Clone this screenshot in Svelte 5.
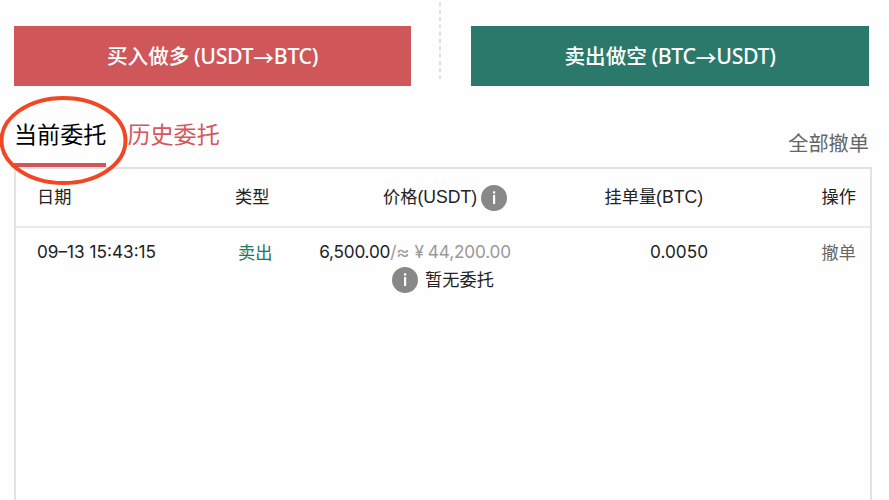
<script lang="ts">
	let tab = $state('current');

	const sides = [
		{ key: 'buy', label: '买入做多', from: 'USDT', to: 'BTC' },
		{ key: 'sell', label: '卖出做空', from: 'BTC', to: 'USDT' }
	];

	const orders = [
		{ time: '09–13 15:43:15', type: '卖出', price: '6,500.00', cny: '44,200.00', amount: '0.0050' }
	];
</script>

{#snippet info()}
	<svg class="info" viewBox="0 0 26 26" aria-hidden="true">
		<circle cx="13" cy="13" r="13" fill="#888" />
		<rect x="12" y="6.3" width="2.2" height="2.3" fill="#fff" />
		<rect x="12" y="10" width="2.2" height="9" fill="#fff" />
	</svg>
{/snippet}

<div class="page">
	<div class="trade">
		{#each sides as side, i}
			{#if i > 0}
				<svg class="divider" viewBox="0 0 2 80" aria-hidden="true">
					<path d="M1 2.5V79" stroke="#c3d3d0" stroke-width="1.3" stroke-dasharray="4 3.3" />
				</svg>
			{/if}
			<button class="side {side.key}">
				<span>{side.label} <b>({side.from}</b><i class="arrow">→</i><b>{side.to})</b></span>
			</button>
		{/each}
	</div>

	<div class="bar">
		<div class="tabs">
			<button class="tab" class:active={tab === 'current'} onclick={() => (tab = 'current')}>当前委托</button>
			<button class="tab" class:active={tab === 'history'} onclick={() => (tab = 'history')}>历史委托</button>
			<!-- hand-drawn marker over the current tab -->
			<svg class="mark" viewBox="0 0 130 92" aria-hidden="true">
				<ellipse cx="63.5" cy="45.5" rx="62" ry="42.5" fill="none" stroke="#f04824" stroke-width="4" />
			</svg>
		</div>
		<button class="all">全部撤单</button>
	</div>

	<div class="panel">
		<div class="row head">
			<span class="date">日期</span>
			<span class="type">类型</span>
			<span class="price"><span>价格<i class="unit">(USDT)</i></span>{@render info()}</span>
			<span class="amount">挂单量<i class="unit">(BTC)</i></span>
			<span class="op">操作</span>
		</div>
		{#each orders as o}
			<div class="row">
				<span class="date">{o.time}</span>
				<span class="type sold">{o.type}</span>
				<span class="price"><i class="usdt">{o.price}</i><i class="cny">/<i class="approx">≈</i><em>¥</em>{o.cny}</i></span>
				<span class="amount">{o.amount}</span>
				<button class="op cancel">撤单</button>
			</div>
		{/each}
		<div class="empty">{@render info()}<span>暂无委托</span></div>
	</div>
</div>

<style>
	:global(body) {
		background: #fefefe;
		overflow: hidden;
	}
	.page {
		box-sizing: border-box;
		height: 500px;
		padding: 0 17px 0 14px;
		display: flex;
		flex-direction: column;
		overflow: hidden;
		font-family: Inter, 'Noto Sans CJK SC', sans-serif;
		color: #222;
	}
	button {
		border: 0;
		padding: 0;
		background: none;
		font: inherit;
		color: inherit;
		white-space: nowrap;
	}
	b,
	i,
	em {
		font-style: normal;
		font-weight: inherit;
	}

	/* TRADE BUTTONS */
	.trade {
		display: flex;
		align-items: flex-end;
		height: 86px;
		padding-right: 3px;
		margin-right: -1px;
	}
	.side {
		flex: 0 0 397px;
		height: 60px;
		padding-bottom: 2px;
		font-family: 'Noto Sans CJK SC', sans-serif;
		font-size: 20.6px;
		font-weight: 500;
		color: #fff;
	}
	.side b {
		font-family: 'Noto Sans', sans-serif;
		font-size: 21.3px;
		letter-spacing: -0.35px;
	}
	.arrow {
		position: relative;
		top: 2px;
	}
	.buy {
		background: #cf575a;
	}
	.sell {
		background: #2b796a;
		flex-basis: 398px;
	}
	.divider {
		flex: none;
		width: 2px;
		height: 80px;
		margin: 0 30px 6px 28px;
	}

	/* TABS */
	.bar {
		display: flex;
		justify-content: space-between;
		height: 81px;
	}
	.tabs {
		position: relative;
		display: flex;
		gap: 21px;
	}
	.tab {
		box-sizing: border-box;
		height: 81px;
		padding-top: 16px;
		border-bottom: 4px solid transparent;
		font-size: 23.1px;
		color: #d4575d;
	}
	.tab.active {
		color: #000;
		border-bottom-color: #cf575c;
	}
	.mark {
		position: absolute;
		left: -14px;
		top: 9px;
		width: 130px;
		height: 92px;
		pointer-events: none;
	}
	.all {
		padding-top: 31px;
		margin-right: 3px;
		font-size: 20.2px;
		color: #666;
	}

	/* ORDERS */
	.panel {
		flex: 1;
		border: 2px solid #e2e2e2;
		border-bottom: 0;
	}
	.row {
		display: grid;
		grid-template-columns: 198px 80px 196px 197px 148px;
		align-items: center;
		height: 46px;
		padding-left: 21px;
		font-size: 17.2px;
		white-space: nowrap;
	}
	.head {
		height: 57px;
		border-bottom: 2px solid #eaeaea;
	}
	.head span {
		line-height: 26px;
	}
	.head > span:not(.price),
	.price > span {
		padding-bottom: 2px;
	}
	.price {
		display: flex;
		align-items: center;
		justify-content: flex-end;
	}
	.amount,
	.op {
		text-align: right;
	}
	.unit {
		font-family: 'Liberation Sans', sans-serif;
		font-size: 17.6px;
	}
	.head .info {
		margin: 0 4px 0 4px;
	}
	.head .amount {
		padding-right: 5px;
	}
	.usdt {
		letter-spacing: -0.2px;
	}
	.sold {
		padding-left: 3px;
		color: #20795f;
	}
	.cny {
		color: #999;
		letter-spacing: -0.15px;
	}
	.approx {
		display: inline-block;
		transform: scaleX(1.2);
		margin: 0 1px;
	}
	.cny em {
		margin: 0 4px 0 5px;
	}
	.cancel {
		color: #666;
	}
	.info {
		flex: none;
		width: 26px;
		height: 26px;
	}
	.empty {
		display: flex;
		align-items: center;
		justify-content: center;
		gap: 7px;
		height: 26px;
		margin-top: -7px;
		font-size: 17.2px;
	}
	.empty span {
		padding-bottom: 3px;
	}
</style>
